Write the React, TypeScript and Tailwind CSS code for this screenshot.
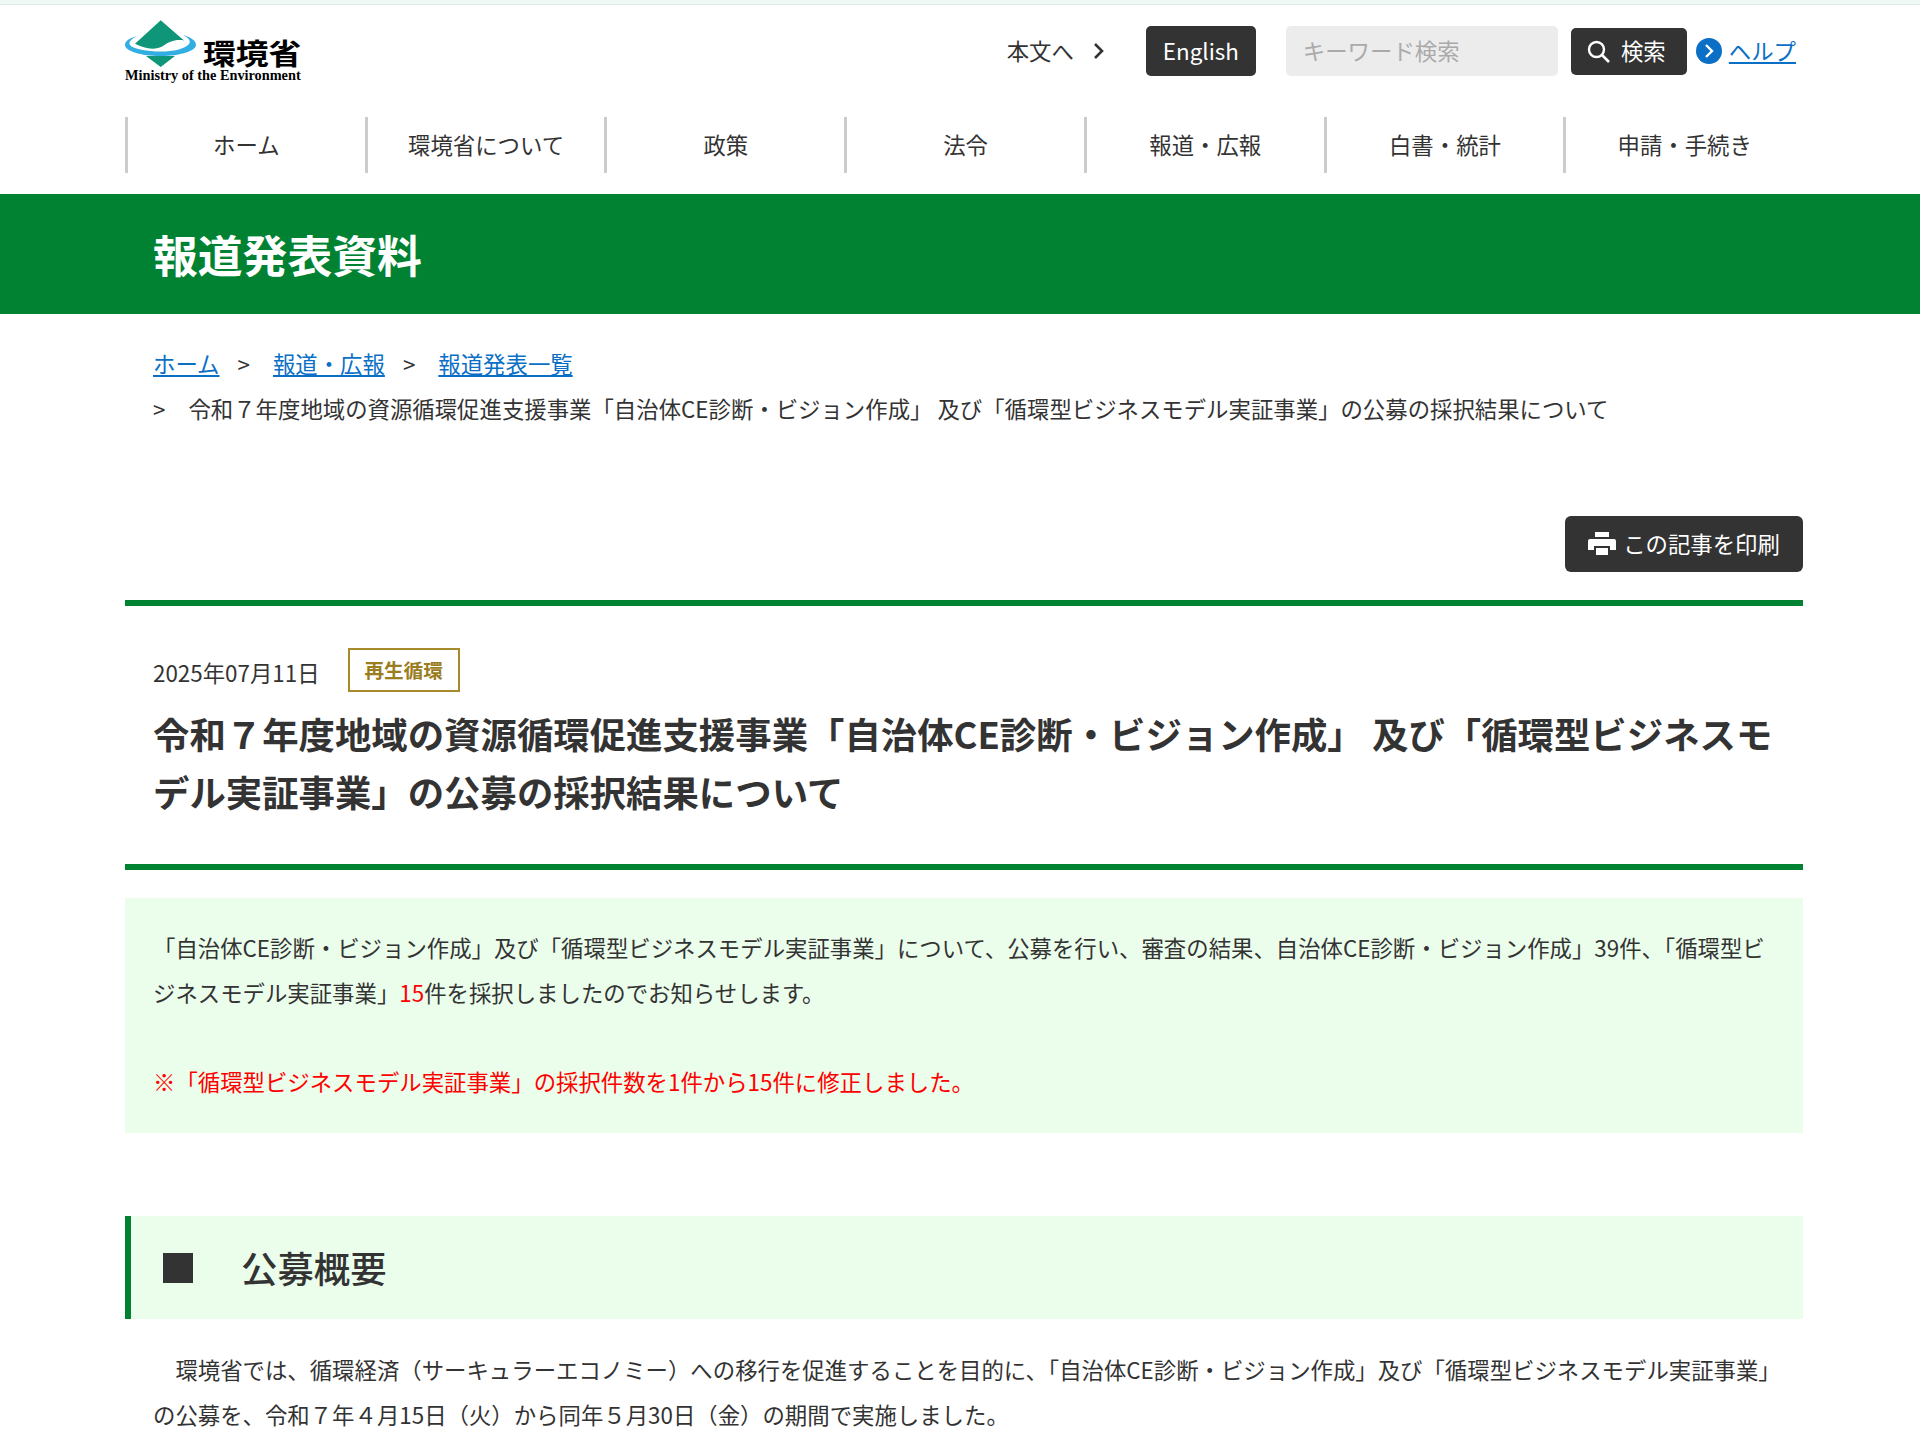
import React from "react";

function Logo() {
  return (
    <div className="flex flex-col w-[178px]">
      <div className="flex items-end h-[48px]">
        <svg width="71" height="47" viewBox="0 0 71 47" className="shrink-0">
          <path d="M35.7 0.2 L59 20.5 C50 19 44 22 38 26 C30 30.5 20 29 10 23.8 Z" fill="#0f9578" />
          <path d="M21 36 L50 36 L35.7 47 Z" fill="#0f9578" />
          <path d="M13 16 C4 18 0 21 0 25 C0 31 16 36 35.5 36 C55 36 71 31 71 25 C71 20 65 17 58 15 C64 18 66 21 64 24 C60 29 48 31.5 36 31.5 C22 31.5 8 29 5 25 C3 22 7 18 13 16 Z" fill="#33aee3" />
        </svg>
        <span className="ml-[7px] inline-block origin-left scale-x-[1.13] whitespace-nowrap text-[29px] leading-[29px] font-bold text-black font-['Noto_Sans_CJK_JP',sans-serif]">環境省</span>
      </div>
      <span className="mt-[2px] text-[14.3px] leading-[12px] font-bold text-black whitespace-nowrap font-['Liberation_Serif',serif]">Ministry of the Environment</span>
    </div>
  );
}

const nav = ["ホーム", "環境省について", "政策", "法令", "報道・広報", "白書・統計", "申請・手続き"];

function Section({ children }: { children: React.ReactNode }) {
  return <div className="px-[28px]">{children}</div>;
}

export default function App() {
  return (
    <div className="bg-white w-[1920px] h-[1440px] overflow-hidden text-[22.4px] text-[#333] font-['Noto_Sans_CJK_JP','Noto_Sans',sans-serif]">
      <div className="h-[5px] bg-[#eef8f4] border-b border-[#dfeae6]" />
      <header className="pl-[125px] pr-[117px]">
        <div className="flex items-start justify-between h-[112px]">
          <div className="pt-[14px]"><Logo /></div>
          <div className="flex items-center pt-[21px] mr-[7px]">
            <span className="text-[22.4px] leading-[46px] mb-[3px]">本文へ</span>
            <svg width="14" height="20" viewBox="0 0 14 20" className="ml-[18px] mb-[1px]"><path d="M3 3 L10 10 L3 17" fill="none" stroke="#333" strokeWidth="2.6" /></svg>
            <span className="ml-[40px] w-[110px] h-[50px] rounded-[5px] bg-[#333] text-white flex items-center justify-center text-[22.4px]">English</span>
            <span className="ml-[30px] w-[272px] h-[50px] rounded-[5px] bg-[#ececec] text-[#aaa] flex items-center pl-[17px] text-[22.4px]">キーワード検索</span>
            <span className="ml-[13px] w-[116px] h-[47px] rounded-[5px] bg-[#333] text-white flex items-center justify-center gap-[11px] pr-[5px] text-[22.4px]">
              <svg width="23" height="23" viewBox="0 0 23 23"><circle cx="9.5" cy="9.5" r="7.5" fill="none" stroke="#fff" strokeWidth="2.4"/><path d="M15 15 L22 22" stroke="#fff" strokeWidth="2.6"/></svg>
              検索
            </span>
            <span className="ml-[9px] w-[26px] h-[26px] rounded-full bg-[#0b6fc6] flex items-center justify-center">
              <svg width="12" height="16" viewBox="0 0 12 16"><path d="M3 2 L9 8 L3 14" fill="none" stroke="#fff" strokeWidth="2.4" /></svg>
            </span>
            <a className="ml-[7px] text-[#0b6fc6] underline text-[22.4px]">ヘルプ</a>
          </div>
        </div>
        <nav className="flex h-[56px] w-[1678px]">
          {nav.map((n) => (
            <div key={n} className="w-[239.8px] border-l-[3px] border-[#ccc] flex items-center justify-center text-[22.4px] text-[#333]">{n}</div>
          ))}
        </nav>
      </header>
      <div className="mt-[21px] h-[120px] bg-[#008232] flex items-center pl-[153px] text-white font-bold text-[44.8px]">報道発表資料</div>
      <div className="pl-[125px] pr-[117px]">
        <Section>
          <div className="pt-[27px] flex items-center h-[71px] leading-[44px] text-[22.4px]">
            <a className="text-[#0b6fc6] underline">ホーム</a>
            <span className="ml-[18px] mr-[23px]">&gt;</span>
            <a className="text-[#0b6fc6] underline">報道・広報</a>
            <span className="ml-[18px] mr-[23px]">&gt;</span>
            <a className="text-[#0b6fc6] underline">報道発表一覧</a>
          </div>
          <div className="leading-[44px] h-[44px] whitespace-nowrap mt-[1px]">
            <span className="mr-[23px]">&gt;</span>令和７年度地域の資源循環促進支援事業「自治体CE診断・ビジョン作成」 及び「循環型ビジネスモデル実証事業」の公募の採択結果について
          </div>
        </Section>
        <div className="flex justify-end mt-[86px]">
          <span className="w-[238px] h-[56px] rounded-[6px] bg-[#333] text-white flex items-center justify-center gap-[7px] text-[22.4px]">
            <svg width="28" height="24" viewBox="0 0 28 24"><path d="M7 0 H21 V5 H7 Z M2 7 H26 Q28 7 28 9 V18 H22 V14 H6 V18 H0 V9 Q0 7 2 7 Z M8 16 H20 V23 H8 Z" fill="#fff"/></svg>
            この記事を印刷
          </span>
        </div>
        <div className="mt-[28px] border-t-[6px] border-[#008232] pt-[42px] pb-[44px] border-b-[6px] px-[28px]">
          <div className="flex items-center h-[44px]">
            <span className="mt-[6px]">2025年07月11日</span>
            <span className="ml-[28px] w-[112px] h-[44px] border-2 border-[#a68a2b] text-[#9a7d1e] font-bold text-[19.6px] flex items-center justify-center">再生循環</span>
          </div>
          <h1 className="mt-[12px] font-bold text-[36.4px] leading-[58px]">令和７年度地域の資源循環促進支援事業「自治体CE診断・ビジョン作成」 及び「循環型ビジネスモデル実証事業」の公募の採択結果について</h1>
        </div>
        <div className="mt-[28px] bg-[#ebfdeb] px-[28px] pt-[27px] pb-[29px] leading-[44.8px]">
          <p>「自治体CE診断・ビジョン作成」及び「循環型ビジネスモデル実証事業」について、公募を行い、審査の結果、自治体CE診断・ビジョン作成」39件、「循環型ビジネスモデル実証事業」<span className="text-[#f00]">15</span>件を採択しましたのでお知らせします。</p>
          <p className="mt-[44.8px] text-[#f00]">※「循環型ビジネスモデル実証事業」の採択件数を1件から15件に修正しました。</p>
        </div>
        <div className="mt-[83px] h-[103px] bg-[#ebfdeb] border-l-[6px] border-[#008232] flex items-center pl-[32px] font-medium text-[36.4px]">
          <span className="w-[30px] h-[30px] bg-[#333] shrink-0" />
          <span className="ml-[48px]">公募概要</span>
        </div>
        <div className="px-[28px] mt-[28px] leading-[44.8px] whitespace-nowrap">
          <p className="indent-[22.4px]">環境省では、循環経済（サーキュラーエコノミー）への移行を促進することを目的に、「自治体CE診断・ビジョン作成」及び「循環型ビジネスモデル実証事業」<br />の公募を、令和７年４月15日（火）から同年５月30日（金）の期間で実施しました。</p>
        </div>
      </div>
    </div>
  );
}
